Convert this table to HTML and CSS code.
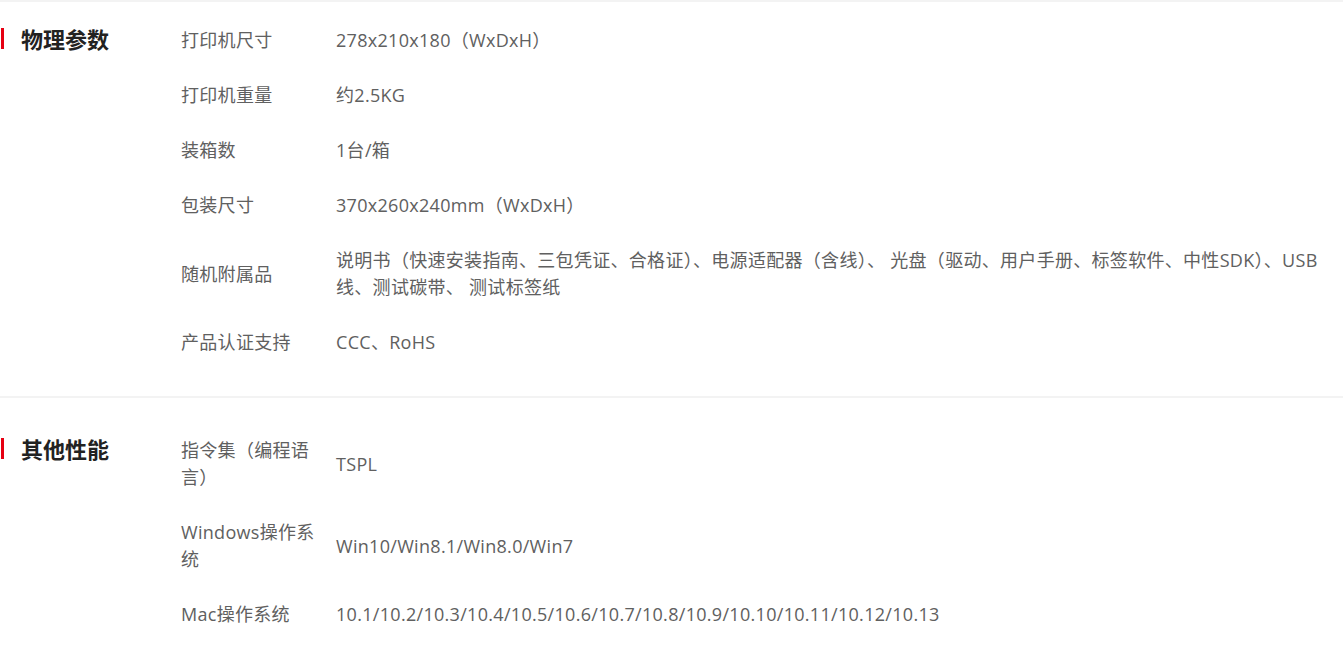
FILE: index.html
```html
<!DOCTYPE html>
<html lang="zh-CN">
<head>
<meta charset="UTF-8">
<meta name="viewport" content="width=device-width, initial-scale=1.0">
<title>产品参数</title>
<link rel="stylesheet" href="styles.css">
</head>
<body>
    <section class="spec-group spec-group-first">
        <h2 class="spec-title">物理参数</h2>
        <div class="spec-list">
            <div class="spec-row">
                <div class="spec-label">打印机尺寸</div>
                <div class="spec-value">278x210x180（WxDxH）</div>
            </div>
            <div class="spec-row">
                <div class="spec-label">打印机重量</div>
                <div class="spec-value">约2.5KG</div>
            </div>
            <div class="spec-row">
                <div class="spec-label">装箱数</div>
                <div class="spec-value">1台/箱</div>
            </div>
            <div class="spec-row">
                <div class="spec-label">包装尺寸</div>
                <div class="spec-value">370x260x240mm（WxDxH）</div>
            </div>
            <div class="spec-row">
                <div class="spec-label">随机附属品</div>
                <div class="spec-value">说明书（快速安装指南、三包凭证、合格证）、电源适配器（含线）、 光盘（驱动、用户手册、标签软件、中性SDK）、USB线、测试碳带、 测试标签纸</div>
            </div>
            <div class="spec-row">
                <div class="spec-label">产品认证支持</div>
                <div class="spec-value">CCC、RoHS</div>
            </div>
        </div>
    </section>

    <section class="spec-group">
        <h2 class="spec-title">其他性能</h2>
        <div class="spec-list">
            <div class="spec-row">
                <div class="spec-label">指令集（编程语言）</div>
                <div class="spec-value">TSPL</div>
            </div>
            <div class="spec-row">
                <div class="spec-label">Windows操作系统</div>
                <div class="spec-value">Win10/Win8.1/Win8.0/Win7</div>
            </div>
            <div class="spec-row">
                <div class="spec-label">Mac操作系统</div>
                <div class="spec-value">10.1/10.2/10.3/10.4/10.5/10.6/10.7/10.8/10.9/10.10/10.11/10.12/10.13</div>
            </div>
        </div>
    </section>
    <div class="page-foot"></div>
</body>
</html>
```

FILE: styles.css
```css
body {
    font-family: "Open Sans", "Noto Sans CJK SC", sans-serif;
    margin: 0;
    background: #fff;
    color: #606060;
}

.spec-group {
    display: flex;
    border-top: 2px solid #f3f3f3;
    padding: 25px 0 26px 1px;
}

.spec-group-first {
    padding-top: 11px;
}

.spec-title {
    flex: 0 0 160px;
    margin: 15px 0 0;
    padding-left: 17px;
    border-left: 3px solid #e60012;
    height: 21px;
    line-height: 21px;
    font-family: "Noto Sans CJK SC", sans-serif;
    font-size: 22px;
    font-weight: bold;
    color: #222;
}

.spec-list {
    flex: 1;
}

.spec-row {
    display: flex;
    align-items: center;
    padding: 14px 0;
    font-size: 18px;
    line-height: 27px;
    letter-spacing: 0.3px;
}

.spec-label {
    width: 140px;
    margin-right: 15px;
    flex: 0 0 140px;
}

.spec-value {
    flex: 1;
    padding-right: 8px;
}

.page-foot {
    height: 14px;
    margin-top: -12px;
    background: linear-gradient(#fff, #f6f6f6);
}
```
